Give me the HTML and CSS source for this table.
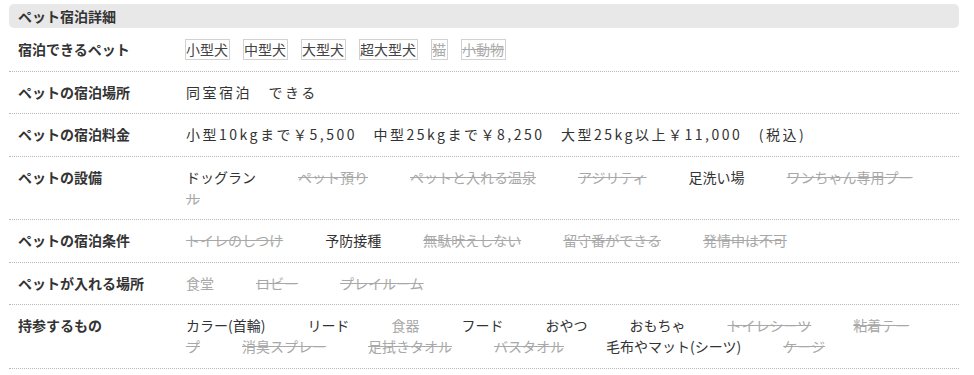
FILE: index.html
```html
<!DOCTYPE html>
<html lang="ja">
<head>
<meta charset="utf-8">
<title>ペット宿泊詳細</title>
<link rel="stylesheet" href="styles.css">
</head>
<body>
<section class="pet-detail">
  <h2 class="pet-detail__title">ペット宿泊詳細</h2>
  <dl class="pet-table">
    <div class="pet-row">
      <dt class="pet-label">宿泊できるペット</dt>
      <dd class="pet-value pet-value--tags">
        <span class="tag">小型犬</span>
        <span class="tag">中型犬</span>
        <span class="tag">大型犬</span>
        <span class="tag">超大型犬</span>
        <span class="tag tag--off">猫</span>
        <span class="tag tag--off">小動物</span>
      </dd>
    </div>
    <div class="pet-row">
      <dt class="pet-label">ペットの宿泊場所</dt>
      <dd class="pet-value pet-value--spaced">同室宿泊　できる</dd>
    </div>
    <div class="pet-row">
      <dt class="pet-label">ペットの宿泊料金</dt>
      <dd class="pet-value pet-value--spaced">小型10kgまで￥5,500　中型25kgまで￥8,250　大型25kg以上￥11,000　(税込)</dd>
    </div>
    <div class="pet-row">
      <dt class="pet-label">ペットの設備</dt>
      <dd class="pet-value"><span class="item">ドッグラン</span><span class="item item--off">ペット預り</span><span class="item item--off">ペットと入れる温泉</span><span class="item item--off">アジリティ</span><span class="item">足洗い場</span><span class="item item--off">ワンちゃん専用プール</span></dd>
    </div>
    <div class="pet-row">
      <dt class="pet-label">ペットの宿泊条件</dt>
      <dd class="pet-value"><span class="item item--off">トイレのしつけ</span><span class="item">予防接種</span><span class="item item--off">無駄吠えしない</span><span class="item item--off">留守番ができる</span><span class="item item--off">発情中は不可</span></dd>
    </div>
    <div class="pet-row">
      <dt class="pet-label">ペットが入れる場所</dt>
      <dd class="pet-value"><span class="item item--muted">食堂</span><span class="item item--off">ロビー</span><span class="item item--off">プレイルーム</span></dd>
    </div>
    <div class="pet-row">
      <dt class="pet-label">持参するもの</dt>
      <dd class="pet-value"><span class="item">カラー(首輪)</span><span class="item">リード</span><span class="item item--muted">食器</span><span class="item">フード</span><span class="item">おやつ</span><span class="item">おもちゃ</span><span class="item item--off">トイレシーツ</span><span class="item item--off">粘着テープ</span><span class="item item--off">消臭スプレー</span><span class="item item--off">足拭きタオル</span><span class="item item--off">バスタオル</span><span class="item">毛布やマット(シーツ)</span><span class="item item--off">ケージ</span></dd>
    </div>
  </dl>
</section>
</body>
</html>
```

FILE: styles.css
```css
* {
  box-sizing: border-box;
}

body {
  margin: 0;
  background: #ffffff;
  color: #333333;
  font-family: "Noto Sans CJK JP", "Noto Sans", sans-serif;
  font-size: 14px;
}

.pet-detail {
  width: 950px;
  margin: 4px 0 0 9px;
}

.pet-detail__title {
  margin: 0;
  height: 24px;
  padding: 0 9px;
  background: #e8e8e8;
  border-radius: 5px;
  font-size: 14px;
  font-weight: 700;
  line-height: 24px;
  color: #333333;
}

.pet-table {
  margin: 1px 0 0;
}

.pet-row {
  display: grid;
  grid-template-columns: 176px 1fr;
  padding: 10px 0 10.5px;
  border-bottom: 1px dotted #b8b8b8;
  line-height: 21px;
}

.pet-label {
  margin: 0;
  padding-left: 9px;
  font-weight: 700;
  color: #333333;
}

.pet-value {
  margin: 0;
  padding-left: 1px;
  padding-right: 36px;
  color: #333333;
}

.pet-value--spaced {
  letter-spacing: 2.5px;
}

.pet-value--tags {
  display: flex;
  align-items: center;
  gap: 13px;
  height: 21px;
  padding-left: 0;
}

.tag {
  display: inline-block;
  padding: 0 1px 0 0;
  border: 1px solid #d2d2d2;
  line-height: 19px;
  color: #444444;
}

.tag--off {
  color: #aaaaaa;
  text-decoration: line-through;
}

.item {
  margin-right: 42px;
}

.item--off {
  color: #a8a8a8;
  text-decoration: line-through;
}

.item--muted {
  color: #a8a8a8;
}
```
